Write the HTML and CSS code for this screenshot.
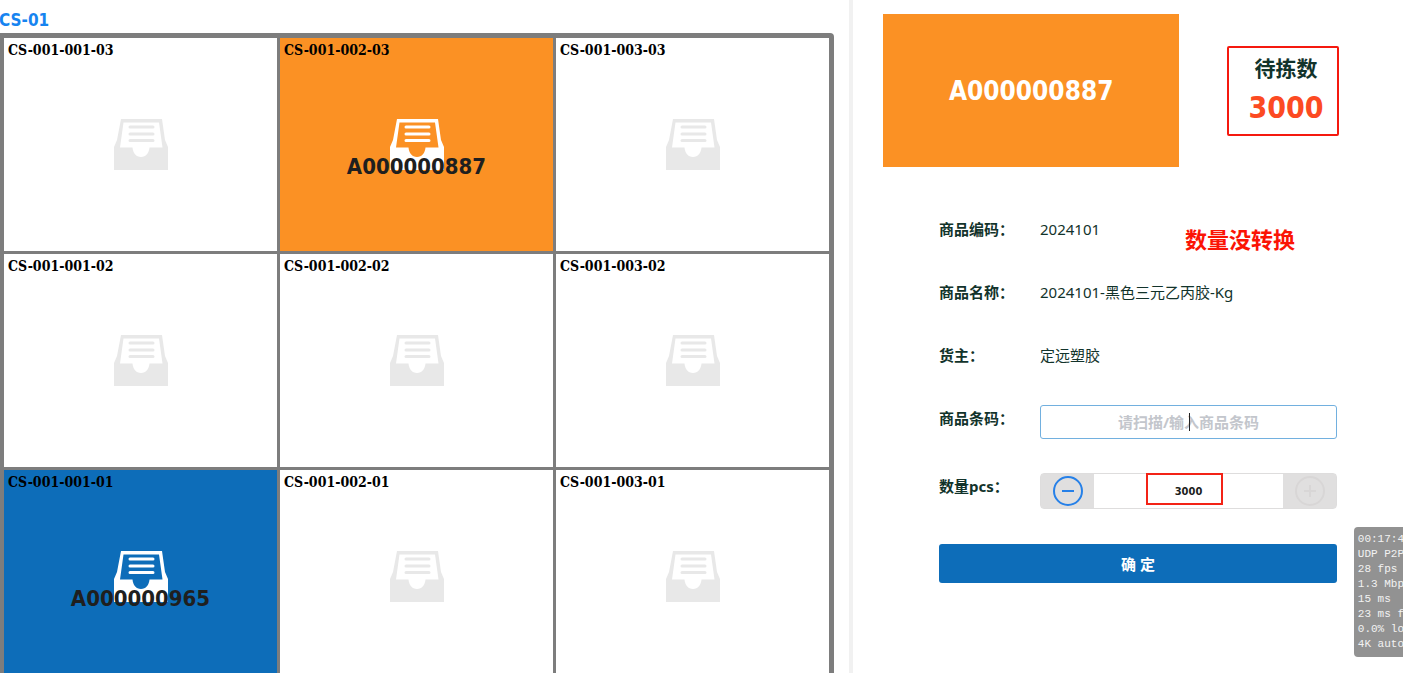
FILE: index.html
```html
<!DOCTYPE html>
<html lang="zh-CN">
<head>
<meta charset="utf-8">
<title>CS-01</title>
<link rel="stylesheet" href="styles.css">
</head>
<body>
<svg class="defs" aria-hidden="true">
  <symbol id="tray" viewBox="0 0 54 51">
    <path fill="currentColor" fill-rule="evenodd" d="M7 0H48L51 21L54 28V51H0V28L3 21ZM9.5 3.5L6 28.5H18.5C19 34 22 38 27 38S35 34 35.500 28.500H48.500L45 3.500Z"/>
    <path fill="none" stroke="currentColor" stroke-width="3" stroke-linecap="round" d="M16 8H39M16 15H39M16 21.500H39"/>
  </symbol>
</svg>
<div class="page">
  <main class="rack">
    <h1 class="rack-title">CS-01</h1>
    <div class="rack-grid">
      <section class="cell"><h2 class="cell-name">CS-001-001-03</h2><svg class="tray"><use href="#tray"/></svg></section>
      <section class="cell cell-orange"><h2 class="cell-name">CS-001-002-03</h2><svg class="tray"><use href="#tray"/></svg><span class="cell-code">A000000887</span></section>
      <section class="cell"><h2 class="cell-name">CS-001-003-03</h2><svg class="tray"><use href="#tray"/></svg></section>
      <section class="cell"><h2 class="cell-name">CS-001-001-02</h2><svg class="tray"><use href="#tray"/></svg></section>
      <section class="cell"><h2 class="cell-name">CS-001-002-02</h2><svg class="tray"><use href="#tray"/></svg></section>
      <section class="cell"><h2 class="cell-name">CS-001-003-02</h2><svg class="tray"><use href="#tray"/></svg></section>
      <section class="cell cell-blue"><h2 class="cell-name">CS-001-001-01</h2><svg class="tray"><use href="#tray"/></svg><span class="cell-code">A000000965</span></section>
      <section class="cell"><h2 class="cell-name">CS-001-002-01</h2><svg class="tray"><use href="#tray"/></svg></section>
      <section class="cell"><h2 class="cell-name">CS-001-003-01</h2><svg class="tray"><use href="#tray"/></svg></section>
    </div>
  </main>
  <aside class="panel">
    <div class="summary">
      <div class="box-code">A000000887</div>
      <div class="pending">
        <div class="pending-label">待拣数</div>
        <div class="pending-count">3000</div>
      </div>
    </div>
    <form class="form">
      <div class="row"><span class="label">商品编码：</span><span class="value">2024101</span><strong class="note">数量没转换</strong></div>
      <div class="row"><span class="label">商品名称：</span><span class="value">2024101-黑色三元乙丙胶-Kg</span></div>
      <div class="row"><span class="label">货主：</span><span class="value">定远塑胶</span></div>
      <div class="row row-field">
        <label class="label" for="barcode">商品条码：</label>
        <div class="field">
          <input class="barcode" id="barcode" type="text" placeholder="请扫描/输入商品条码">
          <span class="caret"></span>
        </div>
      </div>
      <div class="row row-field">
        <label class="label" for="quantity">数量pcs：</label>
        <div class="stepper">
          <button class="step" type="button" aria-label="减少">
            <svg class="step-icon" viewBox="0 0 30 30"><circle cx="15" cy="15" r="14"/><path d="M9 15H21"/></svg>
          </button>
          <input class="quantity" id="quantity" type="text" value="3000">
          <button class="step" type="button" aria-label="增加" disabled>
            <svg class="step-icon" viewBox="0 0 30 30"><circle cx="15" cy="15" r="14"/><path d="M9 15H21M15 9V21"/></svg>
          </button>
          <span class="mark"></span>
        </div>
      </div>
      <button class="confirm" type="button">确 定</button>
    </form>
  </aside>
  <pre class="stats">00:17:4
UDP P2P
28 fps
1.3 Mbp
15 ms
23 ms f
0.0% lo
4K auto</pre>
</div>
</body>
</html>
```
FILE: styles.css
```css
* {
  box-sizing: border-box;
}

body {
  margin: 0;
  background: #fff;
  color: #12332b;
  font-family: "Noto Sans", "Noto Sans CJK SC", sans-serif;
  font-size: 15px;
}

.defs {
  position: absolute;
  width: 0;
  height: 0;
}

.page {
  position: relative;
  display: grid;
  grid-template-columns: minmax(0, 849fr) minmax(0, 554fr);
  height: 100vh;
  overflow: hidden;
}

.rack {
  padding: 8px 15px 0 0;
}

.rack-title {
  margin: 0 0 1px -1px;
  color: #1684f0;
  font: bold 17px/24px "DejaVu Sans Condensed", "DejaVu Sans", sans-serif;
}

.rack-grid {
  display: grid;
  grid-template-columns: repeat(3, 1fr);
  grid-auto-rows: 213px;
  gap: 3px;
  padding: 5px 5px 5px 4px;
  border-radius: 0 4px 4px 0;
  background: #7d7d7d;
}

.cell {
  position: relative;
  display: grid;
  place-items: center;
  background: #fff;
  color: #e8e8e8;
}

.cell-orange {
  background: #fb9124;
  color: #fff;
}

.cell-blue {
  background: #0d6db9;
  color: #fff;
}

.cell-name {
  position: absolute;
  top: 2px;
  left: 4px;
  margin: 0;
  color: #000;
  font: bold 14px/20px "DejaVu Serif Condensed", "DejaVu Serif", serif;
}

.tray {
  width: 54px;
  height: 51px;
}

.cell-code {
  position: absolute;
  top: 114px;
  left: 0;
  right: 0;
  color: #1f1f1f;
  font: bold 22px/30px "DejaVu Sans Condensed", "DejaVu Sans", sans-serif;
  text-align: center;
}

.panel {
  padding: 14px 64px 0 30px;
  border-left: 4px solid #f1f1f1;
}

.summary {
  display: flex;
  align-items: center;
  justify-content: space-between;
}

.box-code {
  display: grid;
  place-items: center;
  width: 65%;
  height: 153px;
  background: #fb9124;
  color: #fff;
  font: bold 26px/36px "DejaVu Sans Condensed", "DejaVu Sans", sans-serif;
}

.pending {
  width: 112px;
  padding: 3px 0 3px 6px;
  border: 2px solid #f5190f;
  border-radius: 2px;
  text-align: center;
}

.pending-label {
  font-size: 21px;
  font-weight: bold;
  line-height: 34px;
}

.pending-count {
  color: #fc4a22;
  font: bold 30px/46px "DejaVu Sans Condensed", "DejaVu Sans", sans-serif;
}

.form {
  display: flex;
  flex-direction: column;
  padding: 48px 2px 0 56px;
}

.row {
  position: relative;
  display: grid;
  grid-template-columns: 101px 1fr;
  height: 63px;
  line-height: 28px;
}

.label {
  font-weight: bold;
}

.note {
  position: absolute;
  top: 10px;
  left: 246px;
  color: #fb1405;
  font-size: 22px;
}

.row-field {
  height: 68px;
}

.field {
  position: relative;
  height: 34px;
  margin-top: 1px;
}

.barcode {
  width: 100%;
  height: 100%;
  padding: 0;
  border: 1px solid #72b0df;
  border-radius: 3px;
  outline: 0;
  font: bold 15px "Noto Sans", "Noto Sans CJK SC", sans-serif;
  text-align: center;
}

.barcode::placeholder {
  color: #c3c6cc;
}

.caret {
  position: absolute;
  top: 8px;
  left: 50%;
  width: 1px;
  height: 18px;
  background: #222;
}

.stepper {
  position: relative;
  display: flex;
  height: 36px;
  margin-top: 1px;
  border: 1px solid #dedddd;
  border-radius: 4px;
}

.step {
  display: grid;
  place-items: center;
  width: 53px;
  padding: 0;
  border: 0;
  background: #e0dfdf;
  color: #2680e8;
}

.step:disabled {
  color: #d8d6d6;
}

.step-icon {
  width: 30px;
  height: 30px;
  fill: none;
  stroke: currentColor;
  stroke-width: 2;
}

.quantity {
  flex: 1;
  min-width: 0;
  padding: 0;
  border: 0;
  color: #1c1c1c;
  font: bold 11px "DejaVu Sans Condensed", "DejaVu Sans", sans-serif;
  text-align: center;
}

.mark {
  position: absolute;
  top: -1px;
  left: 105px;
  width: 77px;
  height: 32px;
  border: 2px solid #f32316;
}

.confirm {
  height: 39px;
  margin-top: 4px;
  border: 0;
  border-radius: 3px;
  background: #0d6db9;
  color: #fff;
  font: bold 15px "Noto Sans", "Noto Sans CJK SC", sans-serif;
}

.stats {
  position: absolute;
  right: -1px;
  top: 527px;
  margin: 0;
  padding: 5px 0 5px 4px;
  border-radius: 4px 0 0 4px;
  background: #929292;
  color: #f2f2f2;
  font: 11px/15px "Liberation Mono", monospace;
}
```
